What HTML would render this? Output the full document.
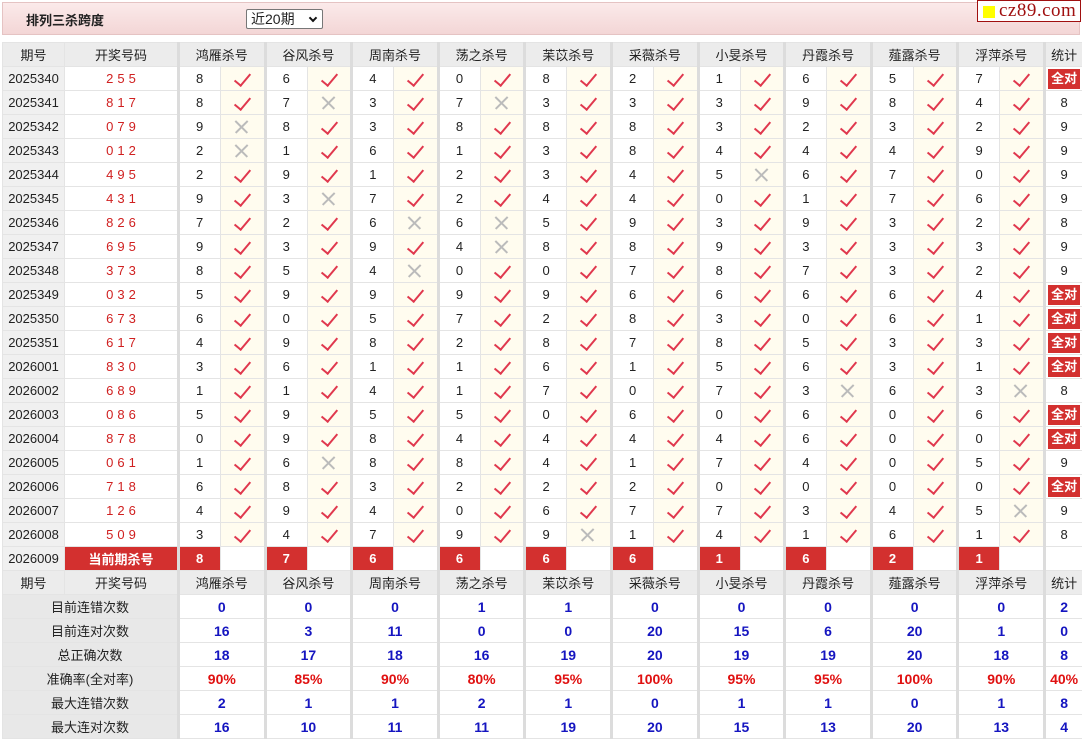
<!DOCTYPE html>
<html><head><meta charset="utf-8">
<style>
*{margin:0;padding:0;box-sizing:border-box}
body{width:1082px;height:740px;background:#fff;font-family:"Liberation Sans","Noto Sans CJK SC",sans-serif;font-size:13px;color:#222;position:relative;overflow:hidden}
.bar{position:absolute;left:2px;top:2px;width:1078px;height:33px;background:linear-gradient(#fbeaea,#f3d6d6);border:1px solid #e5c3c3}
.bar b{position:absolute;left:23px;top:7px;font-size:13px;color:#222}
.sel{position:absolute;left:243px;top:6px;width:77px;height:20px;border:1px solid #777;background:#fff;font-size:14px;line-height:18px;padding-left:4px;border-radius:2px}
.sel i{position:absolute;right:6px;top:5px;width:6px;height:6px;border-right:2px solid #111;border-bottom:2px solid #111;transform:rotate(45deg)}
.logo{position:absolute;left:977px;top:0;width:104px;height:22px;background:#fff;border:1px solid #a01010;font-family:"Liberation Serif",serif;font-size:19px;color:#a01010;line-height:20px;padding-left:21px;letter-spacing:0.5px}
.logo i{position:absolute;left:5px;top:5px;width:12px;height:12px;background:#ff0}
table{position:absolute;left:2px;top:42px;width:1080px;border-collapse:collapse;table-layout:fixed}
td{height:24px;border:1px solid #e4e4e4;text-align:center;padding:0;white-space:nowrap;overflow:hidden}
tr.h td{background:#ececec;font-size:13px}
td.p{background:#f0f0f0;font-size:13px}
td.k{color:#d02020;letter-spacing:4px;padding-left:4px}
td.n{border-left:3px solid #dcdcdc;text-align:left;padding-left:16px}
td.g{border-left:3px solid #dcdcdc}
td.c,td.x,td.e{background:#fffcef;position:relative}
td.e{background:#fff}
td.c::after{content:"";position:absolute;left:17px;top:3px;width:7px;height:14px;border-right:2px solid #e0384e;border-bottom:2px solid #e0384e;transform:rotate(40deg)}
td.x::before,td.x::after{content:"";position:absolute;left:12px;top:11px;width:17px;height:1.5px;background:#bbb;transform:rotate(45deg)}
td.x::after{transform:rotate(-45deg)}
td.s{border-left:3px solid #dcdcdc}
.q{display:block;margin:1px 2px;background:#d3302f;color:#fff;font-weight:bold;height:20px;line-height:20px}
tr.cur td.k{background:#d3302f;color:#fff;font-weight:bold;letter-spacing:0;padding:0}
tr.cur td.n{background:#d3302f;color:#fff;font-weight:bold}
tr.st td.l{background:#e8e8e8}
tr.st td.v{color:#1515c0;font-weight:bold;font-size:14px}
tr.st td.r{color:#e01010;font-weight:bold;font-size:14px}
</style></head><body>
<div class="bar"><b>排列三杀跨度</b><div class="sel">近20期<i></i></div></div>
<div class="logo"><i></i>cz89.com</div>
<table>
<colgroup><col style="width:62px"><col style="width:114px"><col style="width:42px"><col style="width:44.6px"><col style="width:42px"><col style="width:44.6px"><col style="width:42px"><col style="width:44.6px"><col style="width:42px"><col style="width:44.6px"><col style="width:42px"><col style="width:44.6px"><col style="width:42px"><col style="width:44.6px"><col style="width:42px"><col style="width:44.6px"><col style="width:42px"><col style="width:44.6px"><col style="width:42px"><col style="width:44.6px"><col style="width:42px"><col style="width:44.6px"><col style="width:38px"></colgroup>
<tr class="h"><td>期号</td><td>开奖号码</td><td class="g" colspan="2">鸿雁杀号</td><td class="g" colspan="2">谷风杀号</td><td class="g" colspan="2">周南杀号</td><td class="g" colspan="2">荡之杀号</td><td class="g" colspan="2">苿苡杀号</td><td class="g" colspan="2">采薇杀号</td><td class="g" colspan="2">小旻杀号</td><td class="g" colspan="2">丹霞杀号</td><td class="g" colspan="2">薤露杀号</td><td class="g" colspan="2">浮萍杀号</td><td class="g">统计</td></tr>
<tr><td class="p">2025340</td><td class="k">255</td><td class="n">8</td><td class="c"></td><td class="n">6</td><td class="c"></td><td class="n">4</td><td class="c"></td><td class="n">0</td><td class="c"></td><td class="n">8</td><td class="c"></td><td class="n">2</td><td class="c"></td><td class="n">1</td><td class="c"></td><td class="n">6</td><td class="c"></td><td class="n">5</td><td class="c"></td><td class="n">7</td><td class="c"></td><td class="s"><span class="q">全对</span></td></tr>
<tr><td class="p">2025341</td><td class="k">817</td><td class="n">8</td><td class="c"></td><td class="n">7</td><td class="x"></td><td class="n">3</td><td class="c"></td><td class="n">7</td><td class="x"></td><td class="n">3</td><td class="c"></td><td class="n">3</td><td class="c"></td><td class="n">3</td><td class="c"></td><td class="n">9</td><td class="c"></td><td class="n">8</td><td class="c"></td><td class="n">4</td><td class="c"></td><td class="s">8</td></tr>
<tr><td class="p">2025342</td><td class="k">079</td><td class="n">9</td><td class="x"></td><td class="n">8</td><td class="c"></td><td class="n">3</td><td class="c"></td><td class="n">8</td><td class="c"></td><td class="n">8</td><td class="c"></td><td class="n">8</td><td class="c"></td><td class="n">3</td><td class="c"></td><td class="n">2</td><td class="c"></td><td class="n">3</td><td class="c"></td><td class="n">2</td><td class="c"></td><td class="s">9</td></tr>
<tr><td class="p">2025343</td><td class="k">012</td><td class="n">2</td><td class="x"></td><td class="n">1</td><td class="c"></td><td class="n">6</td><td class="c"></td><td class="n">1</td><td class="c"></td><td class="n">3</td><td class="c"></td><td class="n">8</td><td class="c"></td><td class="n">4</td><td class="c"></td><td class="n">4</td><td class="c"></td><td class="n">4</td><td class="c"></td><td class="n">9</td><td class="c"></td><td class="s">9</td></tr>
<tr><td class="p">2025344</td><td class="k">495</td><td class="n">2</td><td class="c"></td><td class="n">9</td><td class="c"></td><td class="n">1</td><td class="c"></td><td class="n">2</td><td class="c"></td><td class="n">3</td><td class="c"></td><td class="n">4</td><td class="c"></td><td class="n">5</td><td class="x"></td><td class="n">6</td><td class="c"></td><td class="n">7</td><td class="c"></td><td class="n">0</td><td class="c"></td><td class="s">9</td></tr>
<tr><td class="p">2025345</td><td class="k">431</td><td class="n">9</td><td class="c"></td><td class="n">3</td><td class="x"></td><td class="n">7</td><td class="c"></td><td class="n">2</td><td class="c"></td><td class="n">4</td><td class="c"></td><td class="n">4</td><td class="c"></td><td class="n">0</td><td class="c"></td><td class="n">1</td><td class="c"></td><td class="n">7</td><td class="c"></td><td class="n">6</td><td class="c"></td><td class="s">9</td></tr>
<tr><td class="p">2025346</td><td class="k">826</td><td class="n">7</td><td class="c"></td><td class="n">2</td><td class="c"></td><td class="n">6</td><td class="x"></td><td class="n">6</td><td class="x"></td><td class="n">5</td><td class="c"></td><td class="n">9</td><td class="c"></td><td class="n">3</td><td class="c"></td><td class="n">9</td><td class="c"></td><td class="n">3</td><td class="c"></td><td class="n">2</td><td class="c"></td><td class="s">8</td></tr>
<tr><td class="p">2025347</td><td class="k">695</td><td class="n">9</td><td class="c"></td><td class="n">3</td><td class="c"></td><td class="n">9</td><td class="c"></td><td class="n">4</td><td class="x"></td><td class="n">8</td><td class="c"></td><td class="n">8</td><td class="c"></td><td class="n">9</td><td class="c"></td><td class="n">3</td><td class="c"></td><td class="n">3</td><td class="c"></td><td class="n">3</td><td class="c"></td><td class="s">9</td></tr>
<tr><td class="p">2025348</td><td class="k">373</td><td class="n">8</td><td class="c"></td><td class="n">5</td><td class="c"></td><td class="n">4</td><td class="x"></td><td class="n">0</td><td class="c"></td><td class="n">0</td><td class="c"></td><td class="n">7</td><td class="c"></td><td class="n">8</td><td class="c"></td><td class="n">7</td><td class="c"></td><td class="n">3</td><td class="c"></td><td class="n">2</td><td class="c"></td><td class="s">9</td></tr>
<tr><td class="p">2025349</td><td class="k">032</td><td class="n">5</td><td class="c"></td><td class="n">9</td><td class="c"></td><td class="n">9</td><td class="c"></td><td class="n">9</td><td class="c"></td><td class="n">9</td><td class="c"></td><td class="n">6</td><td class="c"></td><td class="n">6</td><td class="c"></td><td class="n">6</td><td class="c"></td><td class="n">6</td><td class="c"></td><td class="n">4</td><td class="c"></td><td class="s"><span class="q">全对</span></td></tr>
<tr><td class="p">2025350</td><td class="k">673</td><td class="n">6</td><td class="c"></td><td class="n">0</td><td class="c"></td><td class="n">5</td><td class="c"></td><td class="n">7</td><td class="c"></td><td class="n">2</td><td class="c"></td><td class="n">8</td><td class="c"></td><td class="n">3</td><td class="c"></td><td class="n">0</td><td class="c"></td><td class="n">6</td><td class="c"></td><td class="n">1</td><td class="c"></td><td class="s"><span class="q">全对</span></td></tr>
<tr><td class="p">2025351</td><td class="k">617</td><td class="n">4</td><td class="c"></td><td class="n">9</td><td class="c"></td><td class="n">8</td><td class="c"></td><td class="n">2</td><td class="c"></td><td class="n">8</td><td class="c"></td><td class="n">7</td><td class="c"></td><td class="n">8</td><td class="c"></td><td class="n">5</td><td class="c"></td><td class="n">3</td><td class="c"></td><td class="n">3</td><td class="c"></td><td class="s"><span class="q">全对</span></td></tr>
<tr><td class="p">2026001</td><td class="k">830</td><td class="n">3</td><td class="c"></td><td class="n">6</td><td class="c"></td><td class="n">1</td><td class="c"></td><td class="n">1</td><td class="c"></td><td class="n">6</td><td class="c"></td><td class="n">1</td><td class="c"></td><td class="n">5</td><td class="c"></td><td class="n">6</td><td class="c"></td><td class="n">3</td><td class="c"></td><td class="n">1</td><td class="c"></td><td class="s"><span class="q">全对</span></td></tr>
<tr><td class="p">2026002</td><td class="k">689</td><td class="n">1</td><td class="c"></td><td class="n">1</td><td class="c"></td><td class="n">4</td><td class="c"></td><td class="n">1</td><td class="c"></td><td class="n">7</td><td class="c"></td><td class="n">0</td><td class="c"></td><td class="n">7</td><td class="c"></td><td class="n">3</td><td class="x"></td><td class="n">6</td><td class="c"></td><td class="n">3</td><td class="x"></td><td class="s">8</td></tr>
<tr><td class="p">2026003</td><td class="k">086</td><td class="n">5</td><td class="c"></td><td class="n">9</td><td class="c"></td><td class="n">5</td><td class="c"></td><td class="n">5</td><td class="c"></td><td class="n">0</td><td class="c"></td><td class="n">6</td><td class="c"></td><td class="n">0</td><td class="c"></td><td class="n">6</td><td class="c"></td><td class="n">0</td><td class="c"></td><td class="n">6</td><td class="c"></td><td class="s"><span class="q">全对</span></td></tr>
<tr><td class="p">2026004</td><td class="k">878</td><td class="n">0</td><td class="c"></td><td class="n">9</td><td class="c"></td><td class="n">8</td><td class="c"></td><td class="n">4</td><td class="c"></td><td class="n">4</td><td class="c"></td><td class="n">4</td><td class="c"></td><td class="n">4</td><td class="c"></td><td class="n">6</td><td class="c"></td><td class="n">0</td><td class="c"></td><td class="n">0</td><td class="c"></td><td class="s"><span class="q">全对</span></td></tr>
<tr><td class="p">2026005</td><td class="k">061</td><td class="n">1</td><td class="c"></td><td class="n">6</td><td class="x"></td><td class="n">8</td><td class="c"></td><td class="n">8</td><td class="c"></td><td class="n">4</td><td class="c"></td><td class="n">1</td><td class="c"></td><td class="n">7</td><td class="c"></td><td class="n">4</td><td class="c"></td><td class="n">0</td><td class="c"></td><td class="n">5</td><td class="c"></td><td class="s">9</td></tr>
<tr><td class="p">2026006</td><td class="k">718</td><td class="n">6</td><td class="c"></td><td class="n">8</td><td class="c"></td><td class="n">3</td><td class="c"></td><td class="n">2</td><td class="c"></td><td class="n">2</td><td class="c"></td><td class="n">2</td><td class="c"></td><td class="n">0</td><td class="c"></td><td class="n">0</td><td class="c"></td><td class="n">0</td><td class="c"></td><td class="n">0</td><td class="c"></td><td class="s"><span class="q">全对</span></td></tr>
<tr><td class="p">2026007</td><td class="k">126</td><td class="n">4</td><td class="c"></td><td class="n">9</td><td class="c"></td><td class="n">4</td><td class="c"></td><td class="n">0</td><td class="c"></td><td class="n">6</td><td class="c"></td><td class="n">7</td><td class="c"></td><td class="n">7</td><td class="c"></td><td class="n">3</td><td class="c"></td><td class="n">4</td><td class="c"></td><td class="n">5</td><td class="x"></td><td class="s">9</td></tr>
<tr><td class="p">2026008</td><td class="k">509</td><td class="n">3</td><td class="c"></td><td class="n">4</td><td class="c"></td><td class="n">7</td><td class="c"></td><td class="n">9</td><td class="c"></td><td class="n">9</td><td class="x"></td><td class="n">1</td><td class="c"></td><td class="n">4</td><td class="c"></td><td class="n">1</td><td class="c"></td><td class="n">6</td><td class="c"></td><td class="n">1</td><td class="c"></td><td class="s">8</td></tr>
<tr class="cur"><td class="p">2026009</td><td class="k">当前期杀号</td><td class="n">8</td><td class="e"></td><td class="n">7</td><td class="e"></td><td class="n">6</td><td class="e"></td><td class="n">6</td><td class="e"></td><td class="n">6</td><td class="e"></td><td class="n">6</td><td class="e"></td><td class="n">1</td><td class="e"></td><td class="n">6</td><td class="e"></td><td class="n">2</td><td class="e"></td><td class="n">1</td><td class="e"></td><td class="s"></td></tr>
<tr class="h"><td>期号</td><td>开奖号码</td><td class="g" colspan="2">鸿雁杀号</td><td class="g" colspan="2">谷风杀号</td><td class="g" colspan="2">周南杀号</td><td class="g" colspan="2">荡之杀号</td><td class="g" colspan="2">苿苡杀号</td><td class="g" colspan="2">采薇杀号</td><td class="g" colspan="2">小旻杀号</td><td class="g" colspan="2">丹霞杀号</td><td class="g" colspan="2">薤露杀号</td><td class="g" colspan="2">浮萍杀号</td><td class="g">统计</td></tr>
<tr class="st"><td class="l" colspan="2">目前连错次数</td><td class="g v" colspan="2">0</td><td class="g v" colspan="2">0</td><td class="g v" colspan="2">0</td><td class="g v" colspan="2">1</td><td class="g v" colspan="2">1</td><td class="g v" colspan="2">0</td><td class="g v" colspan="2">0</td><td class="g v" colspan="2">0</td><td class="g v" colspan="2">0</td><td class="g v" colspan="2">0</td><td class="g v">2</td></tr>
<tr class="st"><td class="l" colspan="2">目前连对次数</td><td class="g v" colspan="2">16</td><td class="g v" colspan="2">3</td><td class="g v" colspan="2">11</td><td class="g v" colspan="2">0</td><td class="g v" colspan="2">0</td><td class="g v" colspan="2">20</td><td class="g v" colspan="2">15</td><td class="g v" colspan="2">6</td><td class="g v" colspan="2">20</td><td class="g v" colspan="2">1</td><td class="g v">0</td></tr>
<tr class="st"><td class="l" colspan="2">总正确次数</td><td class="g v" colspan="2">18</td><td class="g v" colspan="2">17</td><td class="g v" colspan="2">18</td><td class="g v" colspan="2">16</td><td class="g v" colspan="2">19</td><td class="g v" colspan="2">20</td><td class="g v" colspan="2">19</td><td class="g v" colspan="2">19</td><td class="g v" colspan="2">20</td><td class="g v" colspan="2">18</td><td class="g v">8</td></tr>
<tr class="st"><td class="l" colspan="2">准确率(全对率)</td><td class="g r" colspan="2">90%</td><td class="g r" colspan="2">85%</td><td class="g r" colspan="2">90%</td><td class="g r" colspan="2">80%</td><td class="g r" colspan="2">95%</td><td class="g r" colspan="2">100%</td><td class="g r" colspan="2">95%</td><td class="g r" colspan="2">95%</td><td class="g r" colspan="2">100%</td><td class="g r" colspan="2">90%</td><td class="g r">40%</td></tr>
<tr class="st"><td class="l" colspan="2">最大连错次数</td><td class="g v" colspan="2">2</td><td class="g v" colspan="2">1</td><td class="g v" colspan="2">1</td><td class="g v" colspan="2">2</td><td class="g v" colspan="2">1</td><td class="g v" colspan="2">0</td><td class="g v" colspan="2">1</td><td class="g v" colspan="2">1</td><td class="g v" colspan="2">0</td><td class="g v" colspan="2">1</td><td class="g v">8</td></tr>
<tr class="st"><td class="l" colspan="2">最大连对次数</td><td class="g v" colspan="2">16</td><td class="g v" colspan="2">10</td><td class="g v" colspan="2">11</td><td class="g v" colspan="2">11</td><td class="g v" colspan="2">19</td><td class="g v" colspan="2">20</td><td class="g v" colspan="2">15</td><td class="g v" colspan="2">13</td><td class="g v" colspan="2">20</td><td class="g v" colspan="2">13</td><td class="g v">4</td></tr>
</table>
</body></html>
